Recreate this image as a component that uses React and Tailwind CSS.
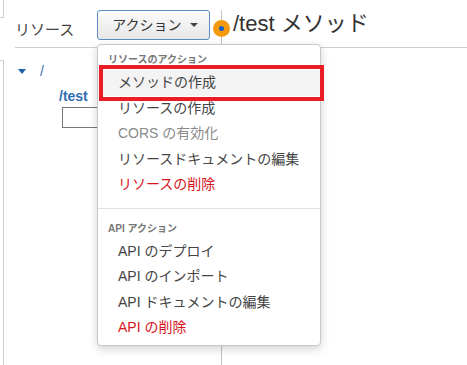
import React from "react";

const resourceItems = [
  { label: "メソッドの作成", tone: "normal", active: true },
  { label: "リソースの作成", tone: "normal" },
  { label: "CORS の有効化", tone: "disabled" },
  { label: "リソースドキュメントの編集", tone: "normal" },
  { label: "リソースの削除", tone: "danger" },
];

const apiItems = [
  { label: "API のデプロイ", tone: "normal" },
  { label: "API のインポート", tone: "normal" },
  { label: "API ドキュメントの編集", tone: "normal" },
  { label: "API の削除", tone: "danger" },
];

const toneClass = (tone) => {
  switch (tone) {
    case "disabled":
      return "text-[#8a8a8a]";
    case "danger":
      return "text-[#d9141b]";
    default:
      return "text-[#444]";
  }
};

const MenuItem = ({ item }) => (
  <div
    className={`h-[25.5px] leading-[25.5px] pl-[20px] text-[14px] whitespace-nowrap ${toneClass(
      item.tone
    )} ${item.active ? "bg-[#f3f3f3]" : ""}`}
  >
    {item.label}
  </div>
);

const ActionMenu = () => (
  <div className="absolute left-[97px] top-[44px] w-[224px] h-[302px] bg-white border border-[#c8c8c8] rounded-[4px] shadow-[0_3px_10px_rgba(0,0,0,0.18)] pt-[5px]">
    <div className="h-[20px] leading-[20px] pl-[10px] text-[10px] font-bold text-[#777]">
      リソースのアクション
    </div>
    {resourceItems.map((item) => (
      <MenuItem key={item.label} item={item} />
    ))}
    <div className="mt-[10px] border-t border-[#e0e0e0]" />
    <div className="mt-[10px] h-[20px] leading-[20px] pl-[10px] text-[10px] font-bold text-[#777]">
      API アクション
    </div>
    {apiItems.map((item) => (
      <MenuItem key={item.label} item={item} />
    ))}

    {/* red annotation box round the first item */}
    <div className="absolute left-[1px] top-[20px] w-[225px] h-[36px] border-[4px] border-[#ec1c24]" />
  </div>
);

export default function App() {
  return (
    <div
      className="relative w-[467px] h-[365px] overflow-hidden bg-white text-[#444]"
      style={{ fontFamily: '"Liberation Sans", "Noto Sans CJK JP", sans-serif' }}
    >
      <div className="flex h-full">
        {/* resource tree column */}
        <div className="w-[221px] shrink-0 flex flex-col">
          <div className="flex h-[47px]">
            <div className="w-[4px] h-[18px] border-r border-b border-[#cfcfcf]" />
            <div className="ml-[11px] pt-[19px] leading-[22px] text-[15px] text-[#444]">
              リソース
            </div>
            <button className="ml-[23px] mt-[10px] h-[30px] w-[113px] flex items-center pl-[14px] gap-[8px] rounded-[3px] border border-[#5b8dc4] bg-gradient-to-b from-[#fbfbfb] to-[#e7e7e7] text-[14px] text-[#333]">
              <span>アクション</span>
              <span className="w-0 h-0 border-l-[4px] border-r-[4px] border-t-[4px] border-l-transparent border-r-transparent border-t-[#444]" />
            </button>
          </div>
          <div className="ml-[15px] border-t border-[#cfcfcf]" />
          <div className="mt-[12px] flex flex-1">
            <div className="w-[4px] border-r border-t border-[#cfcfcf]" />
            <div className="pl-[14px] pt-[3px] flex-1">
              <div className="flex items-center h-[16px]">
                <span className="w-0 h-0 border-l-[4px] border-r-[4px] border-t-[5px] border-l-transparent border-r-transparent border-t-[#1f5fa8]" />
                <span className="ml-[14px] text-[14px] text-[#3a6fb0]">/</span>
              </div>
              <div className="mt-[8px] pl-[41px] text-[14px] font-bold text-[#2f6db3] leading-[18px]">
                /test
              </div>
              <div className="mt-[2px] ml-[44px] w-[80px] h-[21px] border border-[#777]" />
            </div>
          </div>
        </div>

        {/* method column */}
        <div className="flex-1 mt-[10px] border-l border-[#c4c4c4] flex flex-col">
          <div className="h-[37px] pl-[11px] text-[22px] leading-[27px] text-[#333] whitespace-nowrap">
            /test メソッド
          </div>
          <div className="border-t border-[#cfcfcf]" />
        </div>
      </div>

      {/* splitter knob */}
      <div className="absolute left-[213px] top-[20px] w-[17px] h-[17px] rounded-full bg-[#f7990f] flex items-center justify-center">
        <div className="w-[5px] h-[5px] rounded-full bg-[#1a5fc0]" />
      </div>

      <ActionMenu />
    </div>
  );
}
